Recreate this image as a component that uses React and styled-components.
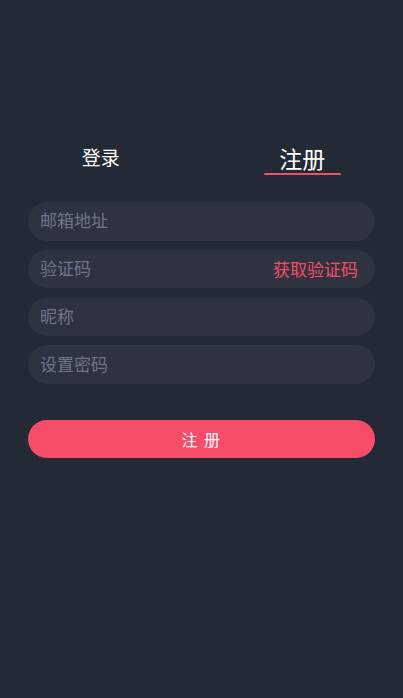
import React, { useState } from "react";
import styled, { createGlobalStyle } from "styled-components";

const Global = createGlobalStyle`
  html, body { margin: 0; padding: 0; background: #242936; }
  body { font-family: "Noto Sans CJK SC", "Noto Sans", sans-serif; }
  * { box-sizing: border-box; }
`;

const Page = styled.div`
  min-height: 698px;
  background: #242936;
  padding-top: 143px;
`;

const Tabs = styled.div`
  display: flex;
`;

const Tab = styled.button`
  flex: 1;
  display: flex;
  flex-direction: column;
  align-items: center;
  background: none;
  border: none;
  padding: 0;
  cursor: pointer;
  font-family: inherit;
`;

const TabLabel = styled.span`
  height: 30px;
  line-height: ${(p) => (p.$active ? "30px" : "27px")};
  color: #ffffff;
  font-size: ${(p) => (p.$active ? "23px" : "19px")};
`;

const Indicator = styled.span`
  width: 77px;
  height: 2px;
  border-radius: 1px;
  background: ${(p) => (p.$active ? "#f54c68" : "transparent")};
`;

const Form = styled.div`
  display: flex;
  flex-direction: column;
  gap: 9.3px;
  padding: 0 28px;
  margin-top: 27px;
`;

const Field = styled.div`
  display: flex;
  align-items: center;
  height: 38.5px;
  border-radius: 20px;
  background: #2f3340;
  padding: 0 17px 0 12px;
`;

const Input = styled.input`
  flex: 1;
  min-width: 0;
  background: transparent;
  border: none;
  outline: none;
  color: #ffffff;
  font-family: inherit;
  font-size: 17px;
  padding: 0 0 3px;
  &::placeholder { color: #6f7488; }
`;

const CodeLink = styled.span`
  color: #f54c68;
  font-size: 17px;
  white-space: nowrap;
  padding-bottom: 2px;
`;

const Actions = styled.div`
  padding: 0 28px;
  margin-top: 35.7px;
`;

const Submit = styled.button`
  display: block;
  width: 100%;
  height: 38.5px;
  border: none;
  border-radius: 20px;
  background: #f54c68;
  color: #ffffff;
  font-family: inherit;
  font-size: 16px;
  letter-spacing: 1.5px;
  cursor: pointer;
`;

export default function App() {
  const [tab, setTab] = useState(1);
  return (
    <Page>
      <Global />
      <Tabs>
        <Tab onClick={() => setTab(0)}>
          <TabLabel $active={tab === 0}>登录</TabLabel>
          <Indicator $active={tab === 0} />
        </Tab>
        <Tab onClick={() => setTab(1)}>
          <TabLabel $active={tab === 1}>注册</TabLabel>
          <Indicator $active={tab === 1} />
        </Tab>
      </Tabs>
      <Form>
        <Field><Input placeholder="邮箱地址" /></Field>
        <Field><Input placeholder="验证码" /><CodeLink>获取验证码</CodeLink></Field>
        <Field><Input placeholder="昵称" /></Field>
        <Field><Input placeholder="设置密码" /></Field>
      </Form>
      <Actions>
        <Submit>注 册</Submit>
      </Actions>
    </Page>
  );
}
